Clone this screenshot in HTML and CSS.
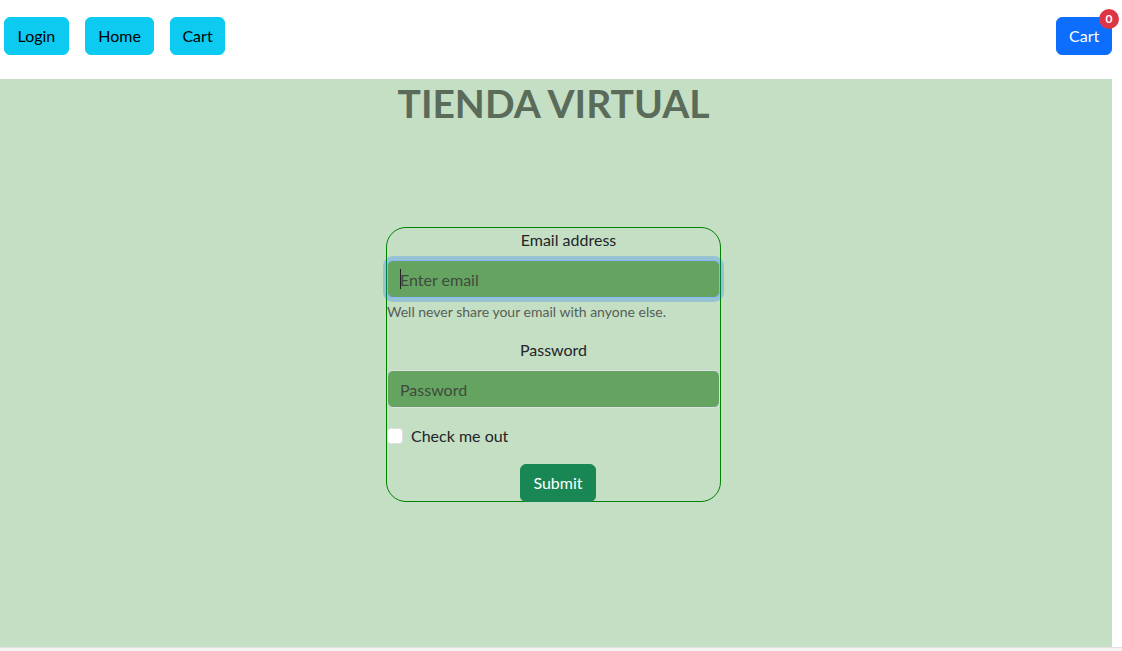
FILE: index.html
```html
<!DOCTYPE html>
<html lang="es">
<head>
<meta charset="utf-8">
<title>Tienda Virtual</title>
<link rel="stylesheet" href="styles.css">
</head>
<body>
<div class="page">
  <nav class="navbar">
    <div class="nav-left">
      <button class="btn btn-info btn-wide">Login</button>
      <button class="btn btn-info btn-wide">Home</button>
      <button class="btn btn-info btn-narrow">Cart</button>
    </div>
    <button class="btn btn-primary cart-btn">Cart<span class="badge">0</span></button>
  </nav>
  <main class="main">
    <h1 class="title">TIENDA VIRTUAL</h1>
    <form class="login-form">
      <div class="field">
        <label class="form-label email-label" for="email">Email address</label>
        <div class="input-wrap">
          <input class="form-control is-focused" id="email" type="email" placeholder="Enter email">
          <span class="caret"></span>
        </div>
        <div class="form-text">Well never share your email with anyone else.</div>
      </div>
      <div class="field">
        <label class="form-label" for="password">Password</label>
        <input class="form-control" id="password" type="password" placeholder="Password">
      </div>
      <div class="field form-check">
        <input class="check" type="checkbox" id="check">
        <label class="check-label" for="check">Check me out</label>
      </div>
      <div class="submit-row">
        <button type="button" class="btn btn-success">Submit</button>
      </div>
    </form>
  </main>
  <div class="bottom-strip"></div>
</div>
</body>
</html>
```
FILE: styles.css
```css
* { box-sizing: border-box; }
html, body { margin: 0; padding: 0; background: #fff; }
body {
  font-family: Lato, "Liberation Sans", sans-serif;
  font-size: 16px;
  line-height: 24px;
  color: #212529;
}
.page { width: 1112px; }
.navbar {
  height: 79px;
  display: flex;
  justify-content: space-between;
  align-items: flex-start;
  padding: 17px 0 0 4px;
}
.nav-left { display: flex; gap: 16px; }
.btn {
  font-family: inherit;
  font-size: 16px;
  line-height: 24px;
  padding: 6px 12px;
  border: 1px solid transparent;
  border-radius: 6px;
  cursor: pointer;
}
.btn-wide { padding: 6px 12.5px; }
.btn-narrow { padding: 6px 11px; }
.btn-info { background: #0dcaf0; border-color: #0dcaf0; color: #000; }
.btn-primary { background: #0d6efd; border-color: #0d6efd; color: #fff; }
.btn-success { background: #198754; border-color: #198754; color: #fff; }
.cart-btn { position: relative; width: 56px; }
.badge {
  position: absolute;
  top: -9px;
  right: -8px;
  width: 20px;
  height: 20px;
  border-radius: 10px;
  background: #dc3545;
  color: #fff;
  font-size: 12px;
  font-weight: 700;
  line-height: 20px;
  text-align: center;
}
.main {
  height: 568px;
  background: #c5dfc4;
  padding: 1px 5px 0 0;
}
.title {
  margin: 0;
  margin-top: -1px;
  text-align: center;
  font-size: 39px;
  line-height: 48px;
  font-weight: 700;
  color: #5a6b5a;
}
.login-form {
  width: 335px;
  margin: 100px auto 0;
  border: 1px solid #008000;
  border-radius: 20px;
}
.field { margin-bottom: 16px; }
.form-label {
  display: block;
  text-align: center;
  margin-bottom: 8px;
}
.email-label { padding-left: 30px; }
.input-wrap { position: relative; }
.form-control {
  display: block;
  width: 100%;
  height: 38px;
  padding: 6px 12px;
  font-family: inherit;
  font-size: 16px;
  line-height: 24px;
  color: #212529;
  background: #65a361;
  border: 1px solid #dee2e6;
  border-radius: 6px;
  outline: none;
}
.form-control::placeholder { color: #3e4b3e; opacity: 1; }
.form-control.is-focused {
  border-color: #86b7fe;
  box-shadow: 0 0 0 4px rgba(13, 110, 253, 0.25);
}
.caret {
  position: absolute;
  left: 13px;
  top: 9px;
  width: 1px;
  height: 20px;
  background: #222;
}
.form-text {
  margin-top: 3px;
  font-size: 14px;
  line-height: 21px;
  color: #555e57;
}
.form-check {
  display: flex;
  align-items: center;
  min-height: 24px;
  gap: 8px;
}
.check {
  appearance: none;
  -webkit-appearance: none;
  width: 16px;
  height: 16px;
  margin: 0;
  background: #fff;
  border: 1px solid #dee2e6;
  border-radius: 4px;
}
.check-label { line-height: 24px; }
.submit-row {
  display: flex;
  justify-content: center;
  padding-left: 9px;
  margin-bottom: -1px;
}
.bottom-strip {
  height: 4px;
  width: 1122px;
  background: #f3f3f3;
  border-top: 1px solid #e2e2e2;
}
```
